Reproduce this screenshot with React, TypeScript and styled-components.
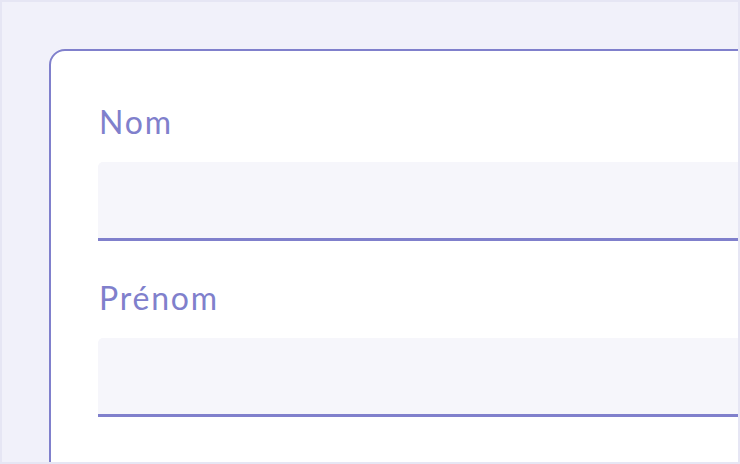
import React from "react";
import styled, { createGlobalStyle } from "styled-components";

const Global = createGlobalStyle`
  html, body { margin: 0; padding: 0; background: #ffffff; }
  * { box-sizing: border-box; }
`;

const Frame = styled.div`
  width: 740px;
  height: 464px;
  border: 2px solid #e6e6f4;
  background: #f1f1fa;
  overflow: hidden;
  padding: 47px 0 0 47px;
`;

const Card = styled.form`
  width: 820px;
  min-height: 600px;
  background: #ffffff;
  border: 2px solid #8080cc;
  border-radius: 16px;
  padding: 51px 47px 0 47px;
  display: flex;
  flex-direction: column;
  gap: 37px;
`;

const Field = styled.div`
  display: flex;
  flex-direction: column;
  gap: 20px;
`;

const Label = styled.label`
  font-family: "Lato", "Noto Sans", sans-serif;
  font-size: 32px;
  line-height: 40px;
  height: 40px;
  letter-spacing: 1.8px;
  padding-left: 1px;
  color: #8080cc;
`;

const Input = styled.input`
  display: block;
  width: 100%;
  height: 79px;
  border: none;
  border-bottom: 3px solid #8080cc;
  border-radius: 5px 5px 0 0;
  background: #f6f6fb;
  outline: none;
  padding: 0 16px;
  font-family: "Lato", sans-serif;
  font-size: 24px;
  color: #8080cc;
`;

export default function App() {
  return (
    <>
      <Global />
      <Frame>
        <Card onSubmit={(e) => e.preventDefault()}>
          <Field>
            <Label htmlFor="nom">Nom</Label>
            <Input id="nom" type="text" />
          </Field>
          <Field>
            <Label htmlFor="prenom">Prénom</Label>
            <Input id="prenom" type="text" />
          </Field>
        </Card>
      </Frame>
    </>
  );
}
